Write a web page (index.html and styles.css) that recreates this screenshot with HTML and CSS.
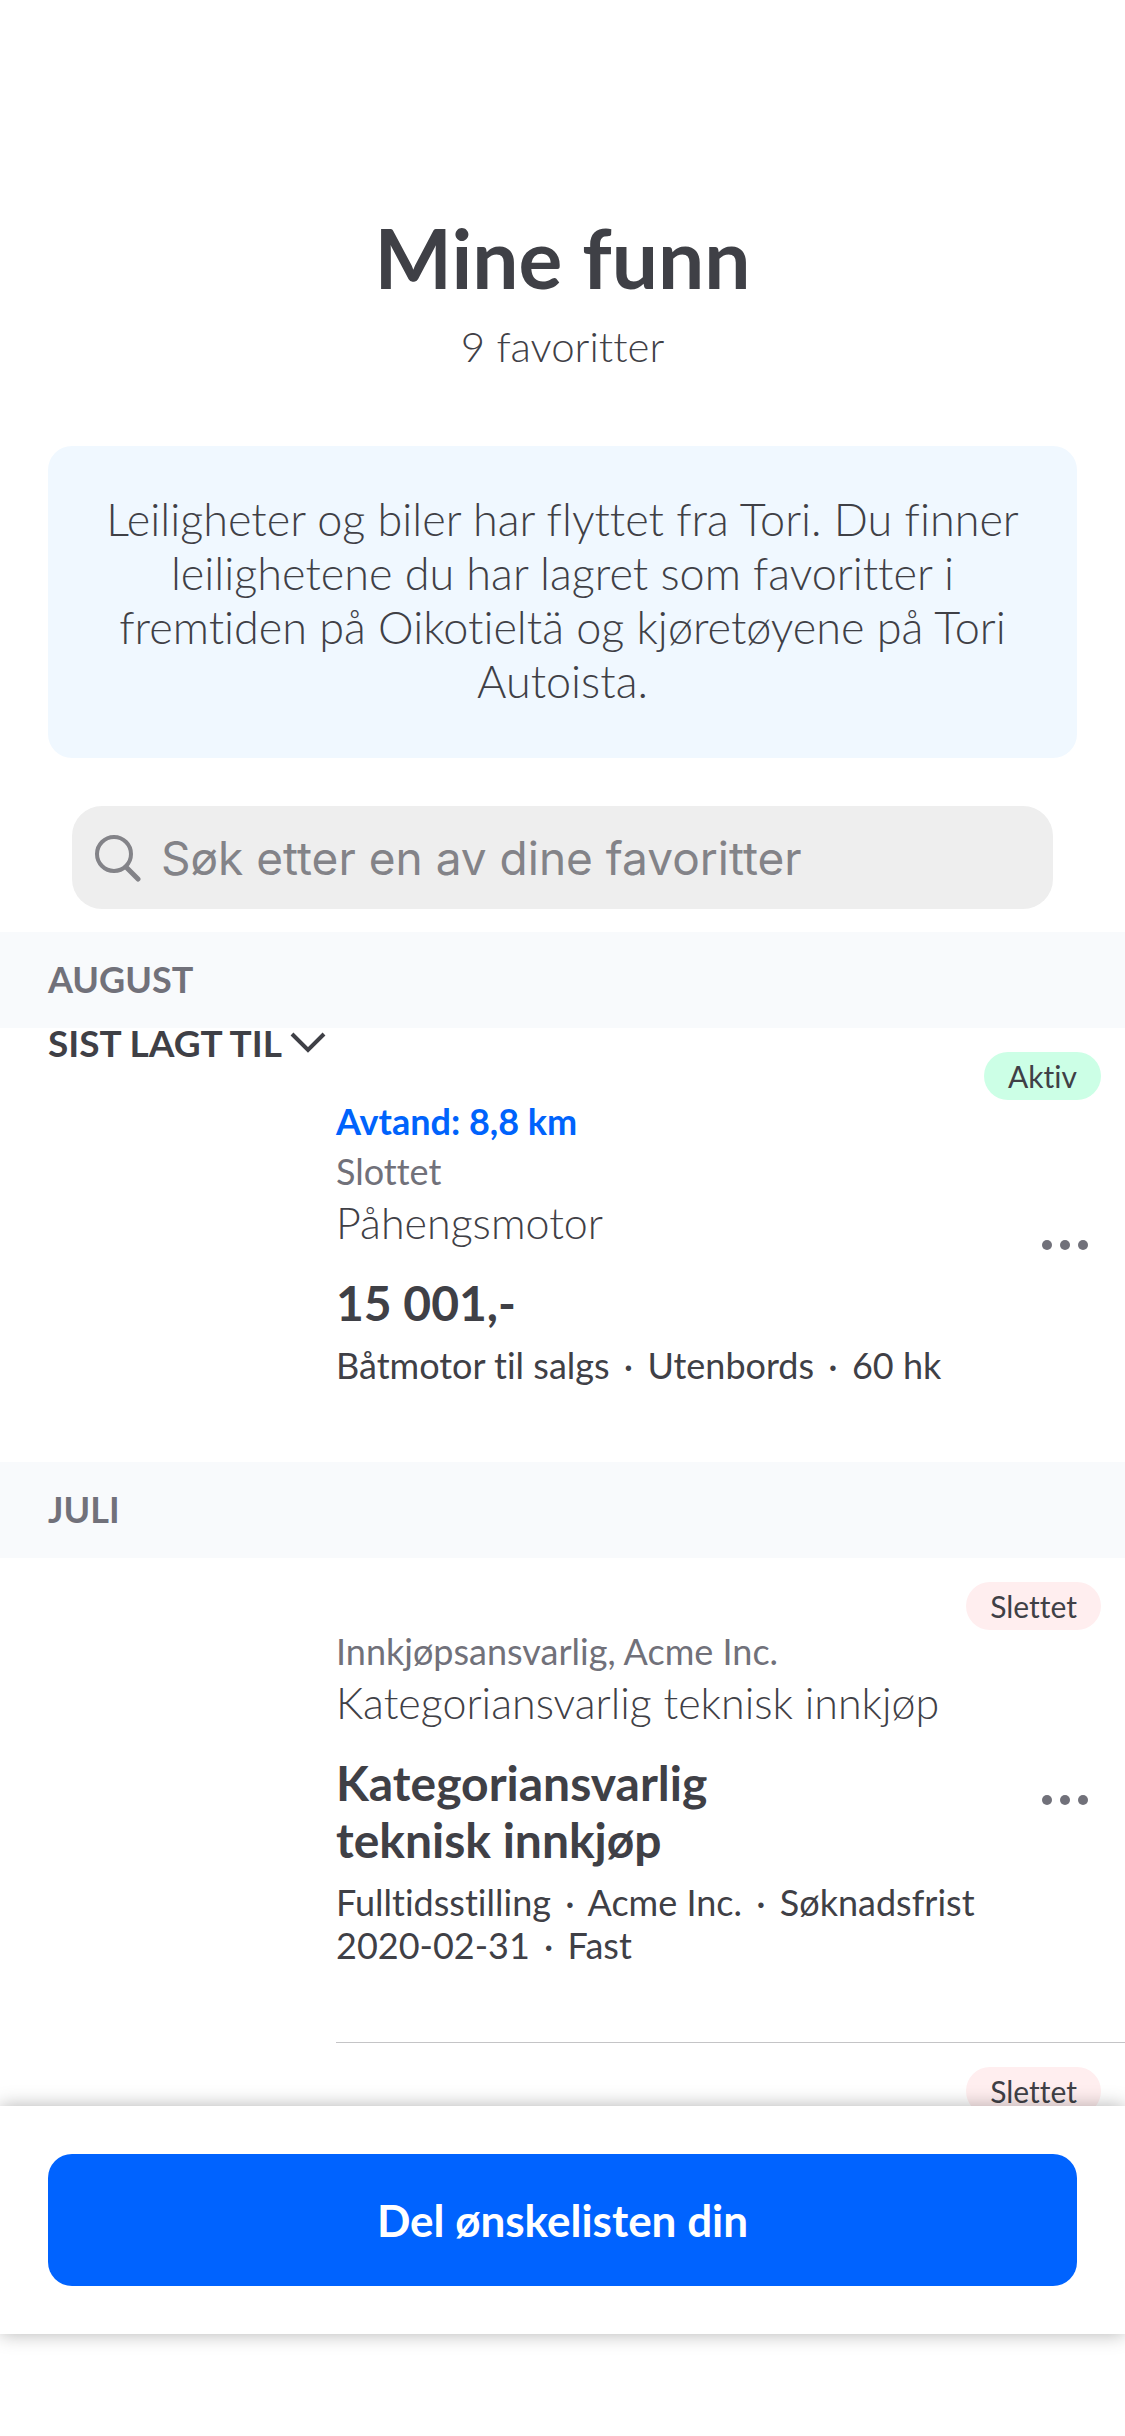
FILE: index.html
```html
<!DOCTYPE html>
<html lang="nb">
<head>
  <meta charset="utf-8">
  <meta name="viewport" content="width=device-width, initial-scale=1">
  <title>Mine funn</title>
  <link rel="stylesheet" href="styles.css">
</head>
<body>
  <div class="app">
    <main class="content">
      <header class="header">
        <h1 class="header-title">Mine funn</h1>
        <p class="header-count">9 favoritter</p>
      </header>

      <p class="notice">Leiligheter og biler har flyttet fra Tori. Du finner leilighetene du har lagret som favoritter i fremtiden på Oikotieltä og kjøretøyene på Tori Autoista.</p>

      <label class="search">
        <svg class="search-icon" viewBox="0 0 48 48" aria-hidden="true">
          <circle cx="20" cy="20" r="17"/>
          <path d="M32 33 L44 45" stroke-width="5"/>
        </svg>
        <input class="search-input" type="search" placeholder="Søk etter en av dine favoritter" aria-label="Søk etter en av dine favoritter">
      </label>

      <section>
        <h2 class="month">AUGUST</h2>
        <article class="card">
          <button class="sort" type="button">SIST LAGT TIL
            <svg class="sort-icon" viewBox="0 0 36 22" aria-hidden="true"><path d="M2 2 L18 18 L34 2"/></svg>
          </button>
          <span class="badge badge-active">Aktiv</span>
          <div class="card-body">
            <p class="distance">Avtand: 8,8 km</p>
            <p class="place">Slottet</p>
            <h3 class="card-title">Påhengsmotor</h3>
            <p class="price">15 001,-</p>
            <p class="details">Båtmotor til salgs <span class="dot">·</span> Utenbords <span class="dot">·</span> 60 hk</p>
          </div>
          <button class="more" type="button" aria-label="Flere valg">
            <svg class="more-icon" viewBox="0 0 48 12" aria-hidden="true"><circle cx="6" cy="6" r="5"/><circle cx="24" cy="6" r="5"/><circle cx="42" cy="6" r="5"/></svg>
          </button>
        </article>
      </section>

      <section>
        <h2 class="month">JULI</h2>
        <article class="card">
          <span class="badge badge-deleted">Slettet</span>
          <div class="card-body">
            <p class="place">Innkjøpsansvarlig, Acme Inc.</p>
            <h3 class="card-title">Kategoriansvarlig teknisk innkjøp</h3>
            <p class="price">Kategoriansvarlig teknisk innkjøp</p>
            <p class="details">Fulltidsstilling <span class="dot">·</span> Acme Inc. <span class="dot">·</span> Søknadsfrist 2020-02-31 <span class="dot">·</span> Fast</p>
          </div>
          <button class="more" type="button" aria-label="Flere valg">
            <svg class="more-icon" viewBox="0 0 48 12" aria-hidden="true"><circle cx="6" cy="6" r="5"/><circle cx="24" cy="6" r="5"/><circle cx="42" cy="6" r="5"/></svg>
          </button>
        </article>
        <hr class="divider">
        <article class="card">
          <span class="badge badge-deleted">Slettet</span>
        </article>
      </section>
    </main>

    <footer class="footer">
      <button class="share" type="button">Del ønskelisten din</button>
    </footer>
  </div>
</body>
</html>
```
FILE: styles.css
```css
* {
  box-sizing: border-box;
}

body {
  margin: 0;
  background: #fff;
  color: #3f4046;
  font-family: Lato, "Liberation Sans", sans-serif;
  font-variant-ligatures: none;
}

h1,
h2,
h3,
p {
  margin: 0;
}

button {
  padding: 0;
  border: 0;
  background: none;
  color: inherit;
  font-family: inherit;
}

.app {
  display: flex;
  flex-direction: column;
  height: 100vh;
  padding-bottom: 102px;
}

.content {
  flex: 1 1 0;
  min-height: 0;
  overflow-y: auto;
  scrollbar-width: none;
}

.header {
  padding: 207px 48px 73px;
  text-align: center;
}

.header-title {
  font-size: 82px;
  font-weight: 700;
  line-height: 100px;
}

.header-count {
  margin-top: 12px;
  font-size: 42px;
  font-weight: 300;
  line-height: 54px;
}

.notice {
  margin: 0 48px;
  padding: 46px 48px 50px;
  border-radius: 24px;
  background: #f0f8ff;
  font-size: 45px;
  font-weight: 300;
  line-height: 54px;
  text-align: center;
}

.search {
  display: flex;
  align-items: center;
  gap: 19px;
  height: 103px;
  margin: 48px 72px 23px;
  padding: 0 22px;
  border-radius: 30px;
  background: #eee;
}

.search-icon {
  flex: none;
  width: 48px;
  height: 48px;
  fill: none;
  stroke: #838388;
  stroke-width: 4;
  stroke-linecap: round;
}

.search-input {
  flex: 1;
  min-width: 0;
  padding: 0;
  border: 0;
  outline: 0;
  background: none;
  font-family: Inter, "Liberation Sans", sans-serif;
  font-size: 46px;
}

.search-input::placeholder {
  color: #838388;
  opacity: 1;
}

.month {
  padding: 23px 48px 25px;
  background: #f8fafc;
  color: #71717a;
  font-size: 36px;
  font-weight: 700;
  line-height: 48px;
}

.card {
  display: grid;
  grid-template-columns: 288px 1fr 90px;
  grid-template-rows: 71px auto;
  padding: 0 24px 75px 48px;
}

.sort {
  grid-area: 1 / 1;
  align-self: start;
  display: flex;
  align-items: center;
  gap: 8px;
  font-size: 37px;
  font-weight: 700;
  line-height: 30px;
  white-space: nowrap;
}

.sort-icon {
  width: 36px;
  height: 22px;
  fill: none;
  stroke: #3f4046;
  stroke-width: 4;
}

.badge {
  grid-area: 1 / 2 / 2 / 4;
  align-self: start;
  justify-self: end;
  margin-top: 24px;
  padding: 0 24px;
  border-radius: 24px;
  font-size: 30px;
  line-height: 48px;
}

.badge-active {
  background: #ccffe6;
}

.badge-deleted {
  background: #ffeeef;
}

.card-body {
  grid-area: 2 / 2;
  display: flex;
  flex-direction: column;
  gap: 6px;
}

.distance,
.place {
  font-size: 36px;
  line-height: 44px;
}

.distance {
  color: #0063fc;
  font-weight: 700;
}

.place {
  color: #71717a;
}

.card-title {
  font-size: 43px;
  font-weight: 300;
  line-height: 48px;
}

.price {
  max-width: 480px;
  margin-top: 21px;
  font-size: 48px;
  font-weight: 700;
  line-height: 57px;
}

.details {
  margin-top: 7px;
  font-size: 36px;
  line-height: 43px;
}

.dot {
  margin: 0 5px;
}

.more {
  grid-area: 1 / 3 / 3 / 4;
  align-self: center;
  justify-self: end;
  height: 48px;
  margin: 75px 12px 0 0;
}

.more-icon {
  display: block;
  width: 48px;
  height: 12px;
  fill: #71717a;
}

.divider {
  height: 1px;
  margin: 0 0 0 336px;
  border: 0;
  background: #c4c4c6;
}

.footer {
  position: relative;
  padding: 48px;
  background: #fff;
  box-shadow: 0 0 18px rgba(0, 0, 0, 0.3);
}

.share {
  display: block;
  width: 100%;
  height: 132px;
  border-radius: 24px;
  background: #0063ff;
  color: #fff;
  font-size: 44px;
  font-weight: 700;
}
```
